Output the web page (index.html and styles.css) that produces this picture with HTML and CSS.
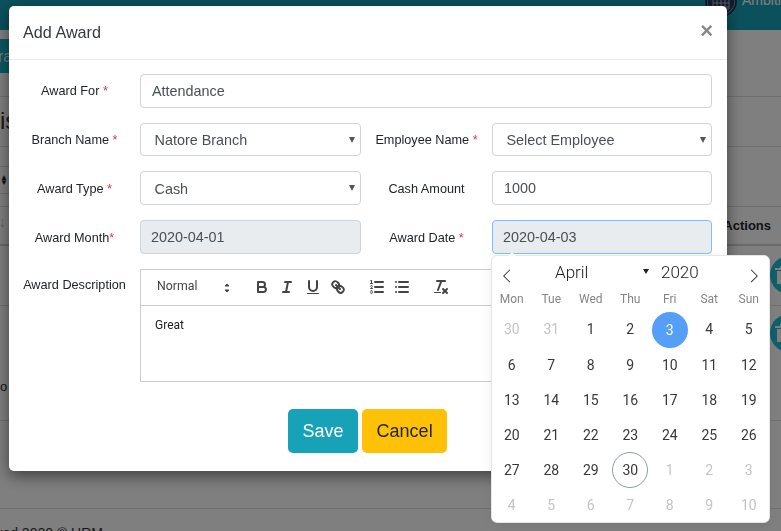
FILE: index.html
```html
<!DOCTYPE html>
<html lang="en">
  <head>
    <meta charset="UTF-8" />
    <title>Add Award</title>
    <link rel="stylesheet" href="styles.css">
  </head>
  <body>
    <div class="page">
      <div class="top-bar">
        <svg class="avatar" width="32" height="32" viewBox="0 0 32 32">
          <circle cx="16" cy="16" r="15" fill="#b9c6cf" stroke="#1a3556" stroke-width="2" />
          <circle cx="16" cy="16" r="13.5" fill="#1e3a5c" />
          <path d="M8 10h16v14H8zM8 14h16M8 18h16M8 22h16M12 10v14M16 10v14M20 10v14" fill="none" stroke="#a9b4c2" stroke-width="1" />
        </svg>
        <span class="company">Ambition</span>
      </div>
      <div class="bg-row bg-row-tab"><div class="bg-tab">ra</div></div>
      <div class="bg-row bg-row-title"><span class="bg-title">is</span></div>
      <div class="bg-row bg-row-search"><div class="bg-length">&#9650;&#9660;</div></div>
      <div class="bg-row bg-row-head">
        <span class="bg-sort"><b>&#8593;</b>&#8595;</span>
        <span class="bg-actions">Actions</span>
      </div>
      <div class="bg-row bg-row-one">
        <div class="trash-btn">
          <svg width="18" height="20" viewBox="0 0 18 20"><path d="M1 3h16v2H1zM6 1h6v2H6zM3 6h12v13H3z" fill="#fff" /></svg>
        </div>
      </div>
      <div class="bg-row bg-row-two">
        <span class="bg-cell">o</span>
        <div class="trash-btn">
          <svg width="18" height="20" viewBox="0 0 18 20"><path d="M1 3h16v2H1zM6 1h6v2H6zM3 6h12v13H3z" fill="#fff" /></svg>
        </div>
      </div>
      <div class="bg-row bg-row-empty"></div>
      <div class="bg-footer"><span>Reserved 2020 &copy; HRM</span></div>
    </div>

    <div class="backdrop"></div>

    <div class="modal">
      <div class="modal-header">
        <h4>Add Award</h4>
        <span class="close">&times;</span>
      </div>
      <form class="modal-body">
        <label>Award For <em>*</em></label>
        <input class="field span-3" type="text" value="Attendance" />

        <label>Branch Name <em>*</em></label>
        <div class="select-wrap">
          <select class="field field-select"><option>Natore Branch</option></select>
        </div>
        <label>Employee Name <em>*</em></label>
        <div class="select-wrap">
          <select class="field field-select"><option>Select Employee</option></select>
        </div>

        <label>Award Type <em>*</em></label>
        <div class="select-wrap">
          <select class="field field-select"><option>Cash</option></select>
        </div>
        <label>Cash Amount</label>
        <input class="field" type="text" value="1000" />

        <label>Award Month<em>*</em></label>
        <input class="field field-readonly" type="text" value="2020-04-01" />
        <label>Award Date <em>*</em></label>
        <input class="field field-readonly field-focus" type="text" value="2020-04-03" />

        <label class="label-top">Award Description</label>
        <div class="editor span-3">
          <div class="toolbar">
            <div class="picker">
              <span>Normal</span>
              <svg width="18" height="18" viewBox="0 0 18 18">
                <polygon points="7 11 9 13 11 11" />
                <polygon points="7 7 9 5 11 7" />
              </svg>
            </div>
            <div class="tool-group">
              <svg class="tool" width="18" height="18" viewBox="0 0 18 18">
                <path d="M5,4H9.5A2.5,2.5,0,0,1,12,6.5v0A2.5,2.5,0,0,1,9.5,9H5A0,0,0,0,1,5,9V4A0,0,0,0,1,5,4Z" />
                <path d="M5,9h5.5A2.5,2.5,0,0,1,13,11.5v0A2.5,2.5,0,0,1,10.5,14H5a0,0,0,0,1,0,0V9A0,0,0,0,1,5,9Z" />
              </svg>
              <svg class="tool" width="18" height="18" viewBox="0 0 18 18">
                <line x1="7" x2="13" y1="4" y2="4" />
                <line x1="5" x2="11" y1="14" y2="14" />
                <line x1="8" x2="10" y1="14" y2="4" />
              </svg>
              <svg class="tool" width="18" height="18" viewBox="0 0 18 18">
                <path d="M5,3V9a4.012,4.012,0,0,0,4,4H9a4.012,4.012,0,0,0,4-4V3" />
                <rect class="solid" height="1" rx="0.5" ry="0.5" width="12" x="3" y="15" />
              </svg>
              <svg class="tool" width="18" height="18" viewBox="0 0 18 18">
                <line x1="7" x2="11" y1="7" y2="11" />
                <path d="M8.9,4.577a3.476,3.476,0,0,1,.36,4.679A3.476,3.476,0,0,1,4.577,8.9C3.185,7.5,2.035,6.4,4.217,4.217S7.5,3.185,8.9,4.577Z" />
                <path d="M13.423,9.1a3.476,3.476,0,0,0-4.679-.36,3.476,3.476,0,0,0,.36,4.679c1.392,1.392,2.5,2.542,4.679.36S14.815,10.5,13.423,9.1Z" />
              </svg>
            </div>
            <div class="tool-group">
              <svg class="tool" width="18" height="18" viewBox="0 0 18 18">
                <line x1="7" x2="15" y1="4" y2="4" />
                <line x1="7" x2="15" y1="9" y2="9" />
                <line x1="7" x2="15" y1="14" y2="14" />
                <line class="thin" x1="2.5" x2="4.5" y1="5.5" y2="5.5" />
                <path class="solid" d="M3.5,6A0.5,0.5,0,0,1,3,5.5V3.085l-0.276.138A0.5,0.5,0,0,1,2.053,3c-0.124-.247-0.023-0.324.224-0.447l1-.5A0.5,0.5,0,0,1,4,2.5v3A0.5,0.5,0,0,1,3.5,6Z" />
                <path class="thin" d="M4.5,10.5h-2c0-.234,1.85-1.076,1.85-2.234A0.959,0.959,0,0,0,2.5,8.156" />
                <path class="thin" d="M2.5,14.846a0.959,0.959,0,0,0,1.85-.109A0.7,0.7,0,0,0,3.75,14a0.688,0.688,0,0,0,.6-0.736,0.959,0.959,0,0,0-1.85-.109" />
              </svg>
              <svg class="tool" width="18" height="18" viewBox="0 0 18 18">
                <line x1="6" x2="15" y1="4" y2="4" />
                <line x1="6" x2="15" y1="9" y2="9" />
                <line x1="6" x2="15" y1="14" y2="14" />
                <line x1="3" x2="3" y1="4" y2="4" />
                <line x1="3" x2="3" y1="9" y2="9" />
                <line x1="3" x2="3" y1="14" y2="14" />
              </svg>
            </div>
            <div class="tool-group">
              <svg class="tool" width="18" height="18" viewBox="0 0 18 18">
                <line x1="5" x2="13" y1="3" y2="3" />
                <line x1="6" x2="9.35" y1="12" y2="3" />
                <line x1="11" x2="15" y1="11" y2="15" />
                <line x1="15" x2="11" y1="11" y2="15" />
                <rect class="solid" height="1" rx="0.5" ry="0.5" width="7" x="2" y="14" />
              </svg>
            </div>
          </div>
          <div class="editor-text">Great</div>
        </div>

        <div class="form-actions span-4">
          <button class="btn btn-save" type="button">Save</button>
          <button class="btn btn-cancel" type="button">Cancel</button>
        </div>
      </form>
    </div>

    <div class="calendar">
      <div class="cal-head">
        <svg class="cal-nav" width="14" height="14" viewBox="0 0 17 17"><path d="M5.207 8.471l7.146 7.147-0.707 0.707-7.853-7.854 7.854-7.853 0.707 0.707-7.147 7.146z" /></svg>
        <span class="cal-month">April</span>
        <span class="cal-caret"></span>
        <span class="cal-year">2020</span>
        <svg class="cal-nav" width="14" height="14" viewBox="0 0 17 17"><path d="M13.207 8.472l-7.854 7.854-0.707-0.707 7.146-7.146-7.146-7.148 0.707-0.707 7.854 7.854z" /></svg>
      </div>
      <div class="cal-weekdays">
        <span>Mon</span><span>Tue</span><span>Wed</span><span>Thu</span><span>Fri</span><span>Sat</span><span>Sun</span>
      </div>
      <div class="cal-days">
        <span class="day off">30</span><span class="day off">31</span><span class="day">1</span><span class="day">2</span><span class="day selected">3</span><span class="day">4</span><span class="day">5</span>
        <span class="day">6</span><span class="day">7</span><span class="day">8</span><span class="day">9</span><span class="day">10</span><span class="day">11</span><span class="day">12</span>
        <span class="day">13</span><span class="day">14</span><span class="day">15</span><span class="day">16</span><span class="day">17</span><span class="day">18</span><span class="day">19</span>
        <span class="day">20</span><span class="day">21</span><span class="day">22</span><span class="day">23</span><span class="day">24</span><span class="day">25</span><span class="day">26</span>
        <span class="day">27</span><span class="day">28</span><span class="day">29</span><span class="day today">30</span><span class="day off">1</span><span class="day off">2</span><span class="day off">3</span>
        <span class="day off">4</span><span class="day off">5</span><span class="day off">6</span><span class="day off">7</span><span class="day off">8</span><span class="day off">9</span><span class="day off">10</span>
      </div>
    </div>
  </body>
</html>
```

FILE: styles.css
```css
* {
  box-sizing: border-box;
}

html,
body {
  margin: 0;
  height: 100%;
  overflow: hidden;
}

body {
  background-color: #fff;
  font-family: "Liberation Sans", Arial, sans-serif;
  color: #212529;
}

/* page behind the dialog */
.page {
  height: 531px;
  overflow: hidden;
  display: flex;
  flex-direction: column;
}

.top-bar {
  height: 30px;
  flex: none;
  background-color: #17a2b8;
  display: flex;
  align-items: flex-start;
  padding-left: 705px;
  overflow: hidden;
  white-space: nowrap;
}

.avatar {
  flex: none;
  margin-top: -15px;
}

.company {
  margin-top: -8px;
  margin-left: 5px;
  font-size: 14px;
  line-height: 16px;
  color: #fff;
}

.bg-row {
  flex: none;
  display: flex;
  align-items: center;
  border-bottom: 1px solid #dedede;
  position: relative;
}

.bg-row-tab {
  height: 67px;
  align-items: flex-start;
}

.bg-tab {
  width: 9px;
  height: 34px;
  margin-top: 9px;
  background-color: #1bb0c4;
  color: #dfe;
  font-size: 16px;
  line-height: 36px;
  text-indent: -2px;
  overflow: hidden;
}

.bg-row-title {
  height: 50px;
}

.bg-title {
  font-size: 24px;
  color: #333;
  line-height: 40px;
  margin-bottom: 1px;
}

.bg-row-search {
  height: 60px;
}

.bg-length {
  width: 9px;
  height: 28px;
  margin-top: 6px;
  border-top: 1px solid #dedede;
  border-bottom: 1px solid #dedede;
  display: flex;
  flex-direction: column;
  align-items: flex-start;
  justify-content: center;
  font-size: 8px;
  line-height: 5px;
  word-break: break-all;
  color: #222;
}

.bg-row-head {
  height: 39px;
  border-bottom: 2px solid #d4d4d4;
  justify-content: space-between;
}

.bg-sort {
  font-size: 14px;
  color: #bbb;
  margin-left: -8px;
  margin-bottom: 8px;
}

.bg-sort b {
  color: #6677cc;
  font-weight: normal;
}

.bg-actions {
  font-size: 13px;
  font-weight: bold;
  margin-right: 10px;
}

.bg-row-one {
  height: 60px;
  justify-content: flex-end;
}

.bg-row-two {
  height: 115px;
  justify-content: space-between;
  align-items: flex-start;
}

.bg-cell {
  font-size: 13px;
  margin-top: 73px;
}

.bg-row-empty {
  height: 88px;
}

.trash-btn {
  width: 38px;
  height: 38px;
  margin-right: -27px;
  border-radius: 50%;
  background-color: #1bc0d4;
  display: flex;
  align-items: center;
  justify-content: flex-start;
  padding-left: 4px;
  margin-bottom: 1px;
}

.bg-row-two .trash-btn {
  margin-top: 8px;
}

.bg-footer {
  flex: none;
  width: 103px;
  display: flex;
  justify-content: flex-end;
  white-space: nowrap;
  font-size: 14px;
  color: #333;
  padding-top: 16px;
}

.backdrop {
  position: fixed;
  inset: 0;
  background-color: rgba(0, 0, 0, 0.5);
}

/* dialog */
.modal {
  position: fixed;
  left: 9px;
  top: 6px;
  width: 718px;
  height: 465px;
  background-color: #fff;
  border-radius: 5px;
  box-shadow: 0 5px 15px rgba(0, 0, 0, 0.5);
}

.modal-header {
  height: 54px;
  display: flex;
  align-items: center;
  justify-content: space-between;
  padding: 0 14px;
  border-bottom: 1px solid #e9ecef;
}

.modal-header h4 {
  margin: 0;
  font-size: 16.2px;
  font-weight: normal;
  color: #343a40;
}

.close {
  font-size: 22px;
  font-weight: bold;
  line-height: 1;
  color: #888;
  margin-top: -4px;
}

.modal-body {
  display: grid;
  grid-template-columns: 131px 221px 131px 220px;
  grid-auto-rows: 33.75px;
  row-gap: 15px;
  padding-top: 13.8px;
}

.modal-body label {
  font-size: 12.7px;
  text-align: center;
  align-self: center;
  padding-top: 1.2px;
  color: #212529;
}

.modal-body label em {
  color: #dc3545;
  font-style: normal;
}

.modal-body .label-top {
  align-self: start;
  padding-top: 9px;
}

.span-3 {
  grid-column: span 3;
}

.span-4 {
  grid-column: span 4;
}

.field {
  width: 100%;
  height: 33.75px;
  padding: 0 11px;
  font-family: "Liberation Sans", Arial, sans-serif;
  font-size: 14.4px;
  color: #495057;
  background-color: #fff;
  border: 1px solid #ced4da;
  border-radius: 4px;
  outline: none;
}

.field-readonly {
  background-color: #e9ecef;
  padding-left: 10px;
}

.field-focus {
  border-color: #80bdff;
}

.select-wrap {
  position: relative;
}

.select-wrap::after {
  content: "";
  position: absolute;
  right: 6px;
  top: 14px;
  border-left: 3px solid transparent;
  border-right: 3px solid transparent;
  border-top: 6px solid #555;
}

.field-select {
  appearance: none;
  padding: 1px 0 0 13.5px;
}

/* rich text box */
.editor {
  grid-row: span 3;
  height: 113px;
  border: 1px solid #ccc;
  font-family: Roboto, sans-serif;
}

.toolbar {
  height: 36px;
  border-bottom: 1px solid #ccc;
  display: flex;
  align-items: center;
  padding-left: 16px;
}

.picker {
  width: 96px;
  flex: none;
  display: flex;
  align-items: center;
  justify-content: space-between;
  font-size: 12.3px;
  color: #444;
  margin-top: -2px;
  padding-right: 17px;
}

.picker svg {
  margin-top: 3px;
  fill: #444;
  stroke: #444;
  stroke-width: 1;
  stroke-linejoin: round;
}

.tool-group {
  display: flex;
  gap: 7.3px;
  margin-right: 21px;
}

.tool {
  flex: none;
  fill: none;
  stroke: #444;
  stroke-width: 2;
  stroke-linecap: round;
  stroke-linejoin: round;
}

.tool .solid {
  fill: #444;
  stroke: none;
}

.tool .thin {
  stroke-width: 1;
}

.editor-text {
  padding: 12px 14px;
  font-size: 12px;
  line-height: 14px;
  color: #222;
}

.form-actions {
  grid-row-start: 8;
  display: flex;
  justify-content: center;
  gap: 4px;
  height: 44px;
  margin-top: -6px;
  padding-left: 14px;
}

.btn {
  height: 44px;
  padding: 0 14.6px;
  border: 0;
  border-radius: 5px;
  font-family: "Liberation Sans", Arial, sans-serif;
  font-size: 18px;
}

.btn-save {
  background-color: #17a2b8;
  color: #fff;
}

.btn-cancel {
  background-color: #ffc107;
  color: #212529;
}

/* date picker */
.calendar {
  position: fixed;
  left: 492px;
  top: 256px;
  width: 277px;
  height: 266px;
  background-color: #fff;
  border-radius: 5px;
  font-family: Roboto, sans-serif;
  box-shadow: 1px 0 0 #e6e6e6, -1px 0 0 #e6e6e6, 0 1px 0 #e6e6e6, 0 -1px 0 #e6e6e6, 0 3px 13px rgba(0, 0, 0, 0.08);
}

.calendar::before {
  content: "";
  position: absolute;
  left: 16px;
  top: -4px;
  border-left: 4px solid transparent;
  border-right: 4px solid transparent;
  border-bottom: 4px solid #fff;
}

.cal-head {
  height: 34px;
  display: flex;
  align-items: center;
  padding-left: 8px;
  color: #222;
}

.cal-nav {
  flex: none;
  fill: #222;
  margin-top: 5px;
}

.cal-month,
.cal-year {
  font-size: 17px;
  font-weight: 300;
  margin-top: -3px;
}

.cal-month {
  width: 88px;
  margin-left: 41px;
}

.cal-caret {
  width: 0;
  height: 0;
  margin-top: -3px;
  border-left: 3.5px solid transparent;
  border-right: 3.5px solid transparent;
  border-top: 5px solid #222;
}

.cal-year {
  width: 86px;
  margin-left: 12px;
}

.cal-weekdays,
.cal-days {
  display: grid;
  grid-template-columns: repeat(7, 39.5px);
}

.cal-weekdays {
  height: 21.5px;
  padding-bottom: 3px;
  align-items: center;
  text-align: center;
  font-size: 12px;
  color: #858585;
}

.day {
  height: 35px;
  width: 36px;
  justify-self: center;
  display: flex;
  align-items: center;
  justify-content: center;
  border-radius: 50%;
  font-size: 14px;
  color: #393939;
}

.day.off {
  color: #c4c4c4;
}

.day.selected {
  height: 36px;
  background-color: #569ff7;
  color: #fff;
}

.day.today {
  height: 36px;
  border: 1px solid #8e9bab;
  margin-top: -1px;
}
```
